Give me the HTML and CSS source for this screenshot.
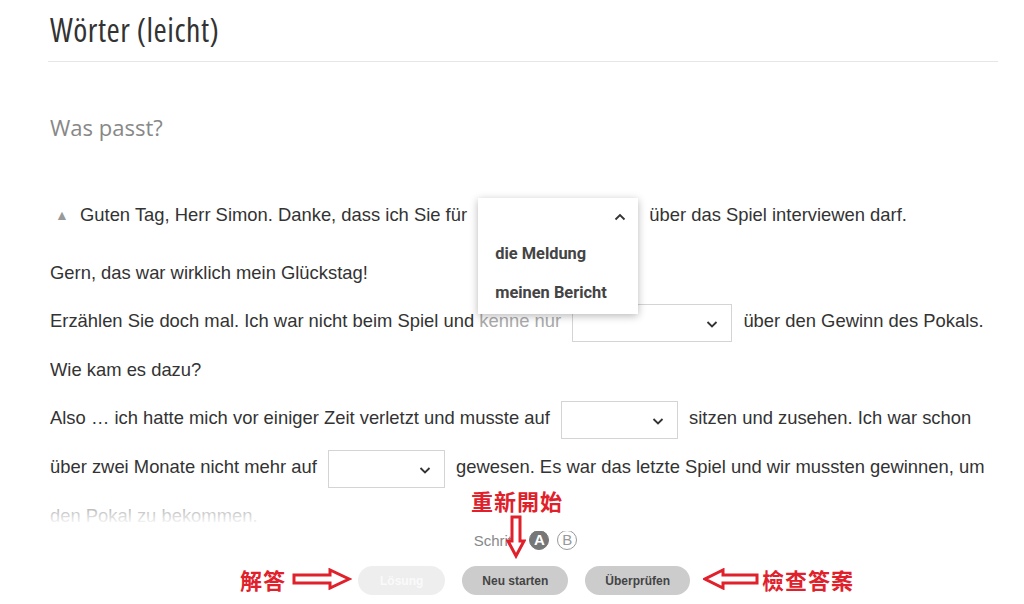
FILE: index.html
```html
<!DOCTYPE html>
<html lang="de">
<head>
  <meta charset="UTF-8" />
  <title>Wörter (leicht)</title>
  <link rel="stylesheet" href="styles.css">
</head>

<body>
  <div class="page">
    <!-- Title -->
    <h1 class="title">Wörter (leicht)</h1>

    <h2 class="task">Was passt?</h2>

    <!-- Dialog with gaps -->
    <div class="exercise">
      <div class="dialog">
        <p class="first"><span class="marker">▲</span>Guten Tag, Herr Simon. Danke, dass ich Sie für <span class="select wide open"><span class="panel"><span class="head"><svg class="chev" width="12" height="8" viewBox="0 0 12 8"><polyline points="1.5,6.5 6,2 10.5,6.5" /></svg></span><span class="option">die Meldung</span><span class="option">meinen Bericht</span></span></span> über das Spiel interviewen darf.</p>
        <p>Gern, das war wirklich mein Glückstag!</p>
        <p>Erzählen Sie doch mal. Ich war nicht beim Spiel und <span class="dim">kenne nur</span> <span class="select wide"><svg class="chev" width="12" height="8" viewBox="0 0 12 8"><polyline points="1.5,2 6,6.5 10.5,2" /></svg></span> über den Gewinn des Pokals.</p>
        <p>Wie kam es dazu?</p>
        <p>Also … ich hatte mich vor einiger Zeit verletzt und musste auf <span class="select"><svg class="chev" width="12" height="8" viewBox="0 0 12 8"><polyline points="1.5,2 6,6.5 10.5,2" /></svg></span> sitzen und zusehen. Ich war schon über zwei Monate nicht mehr auf <span class="select"><svg class="chev" width="12" height="8" viewBox="0 0 12 8"><polyline points="1.5,2 6,6.5 10.5,2" /></svg></span> gewesen. Es war das letzte Spiel und wir mussten gewinnen, um den Pokal zu bekommen.</p>
      </div>
      <div class="fade"></div>
    </div>

    <!-- Steps & buttons -->
    <div class="footer">
      <div class="steps">
        <span class="steps-label">Schritt:</span>
        <span class="step current">A</span>
        <span class="step">B</span>
      </div>
      <div class="actions">
        <button class="btn disabled">Lösung</button>
        <button class="btn">Neu starten</button>
        <button class="btn">Überprüfen</button>
      </div>
    </div>
  </div>

  <!-- Red annotations on top -->
  <div class="note note-restart">重新開始</div>
  <svg class="arrow arrow-down" width="20" height="44" viewBox="0 0 20 44">
    <path d="M6 2 H14 V26 H18 L10 41 L2 26 H6 Z" />
  </svg>

  <div class="note note-solution">解答</div>
  <svg class="arrow arrow-right" width="60" height="22" viewBox="0 0 60 22">
    <path d="M2 7 H38 V2 L57 11 L38 20 V15 H2 Z" />
  </svg>

  <svg class="arrow arrow-left" width="56" height="22" viewBox="0 0 56 22">
    <path d="M54 7 H20 V2 L2 11 L20 20 V15 H54 Z" />
  </svg>
  <div class="note note-check">檢查答案</div>
</body>
</html>
```

FILE: styles.css
```css
/* Basic reset */
* {
  margin: 0;
  padding: 0;
  box-sizing: border-box;
}

body {
  background-color: #fff;
  color: #333;
  font-family: "Liberation Sans", Arial, sans-serif;
  position: relative;
  width: 1024px;
  height: 604px;
  overflow: hidden;
}

.page {
  padding: 0 26px 0 50px;
}

/* Title */
.title {
  font-family: "Open Sans", sans-serif;
  font-weight: 400;
  font-size: 32px;
  font-stretch: 75%;
  letter-spacing: 0.5px;
  line-height: 42px;
  color: #333;
  padding: 9px 0 10px;
  margin-left: -2px;
  padding-left: 2px;
  border-bottom: 1px solid #e6e6e6;
}

.task {
  font-family: "Open Sans", sans-serif;
  font-weight: 400;
  font-size: 22px;
  font-stretch: 88%;
  line-height: 30px;
  color: #888;
  margin-top: 50px;
}

/* Dialog */
.exercise {
  position: relative;
  margin-top: 49px;
}

.dialog {
  height: 340px;
  overflow: hidden;
  font-size: 18.4px;
  line-height: 48.6px;
  color: #333;
}

.dialog p.first {
  margin-bottom: 9px;
}

.marker {
  display: inline-block;
  width: 30px;
  padding-left: 5px;
  font-size: 14px;
  color: #999;
  vertical-align: 1px;
}

.dim {
  color: #aaa;
}

.select {
  position: relative;
  display: inline-block;
  width: 117px;
  height: 38px;
  margin: 0 6px;
  border: 1px solid #d4d4d4;
  background-color: #fff;
  vertical-align: -15px;
}

.select.wide {
  width: 160px;
}

.chev {
  position: absolute;
  right: 13px;
  top: 15px;
  fill: none;
  stroke: #333;
  stroke-width: 1.8;
}

/* Open dropdown */
.select.open {
  border: none;
}

.panel {
  position: absolute;
  top: 0;
  left: 0;
  width: 160px;
  background-color: #fff;
  box-shadow: 0 2px 8px rgba(0, 0, 0, 0.28);
  z-index: 2;
}

.panel .head {
  display: block;
  position: relative;
  height: 38px;
}

.panel .head .chev {
  right: 12px;
  top: 15px;
}

.option {
  display: block;
  height: 39px;
  line-height: 36px;
  padding-left: 17px;
  font-family: Roboto, sans-serif;
  font-weight: 700;
  font-size: 16.4px;
  color: #444;
}

/* Fade at the bottom of the text */
.fade {
  position: absolute;
  left: 0;
  right: 0;
  bottom: 0;
  height: 38px;
  background: linear-gradient(rgba(255, 255, 255, 0.35), #fff 85%);
}

/* Footer */
.footer {
  display: flex;
  flex-direction: column;
  align-items: center;
  margin-top: -3px;
}

.steps {
  display: flex;
  align-items: center;
  gap: 8px;
  height: 24px;
  margin-left: 3px;
  font-size: 15px;
  color: #888;
}

.step {
  width: 20px;
  height: 20px;
  border-radius: 50%;
  border: 1px solid #999;
  color: #999;
  font-size: 15px;
  line-height: 18px;
  text-align: center;
}

.step.current {
  margin-left: 1px;
  background-color: #777;
  border-color: #777;
  color: #fff;
  font-weight: 700;
}

.actions {
  display: flex;
  gap: 17px;
  margin-top: 14px;
}

.btn {
  height: 29px;
  padding: 0 20px;
  border: none;
  border-radius: 15px;
  background-color: #ccc;
  color: #444;
  font-family: "Liberation Sans", Arial, sans-serif;
  font-weight: 700;
  font-size: 12px;
}

.btn.disabled {
  background-color: #eee;
  color: #fafafa;
  padding: 0 22px;
}

/* Red annotations */
.note {
  position: absolute;
  font-family: "Noto Sans CJK TC", "Noto Sans CJK SC", sans-serif;
  font-weight: 700;
  font-size: 22px;
  line-height: 24px;
  letter-spacing: 1px;
  color: #e0202a;
}

.note-restart {
  left: 471px;
  top: 488px;
}

.note-solution {
  left: 240px;
  top: 567px;
}

.note-check {
  left: 762px;
  top: 567px;
}

.arrow {
  position: absolute;
  fill: #fff;
  stroke: #e0202a;
  stroke-width: 3;
  stroke-linejoin: miter;
}

.arrow-down {
  left: 506px;
  top: 515px;
}

.arrow-right {
  left: 292px;
  top: 568px;
}

.arrow-left {
  left: 703px;
  top: 568px;
}
```
